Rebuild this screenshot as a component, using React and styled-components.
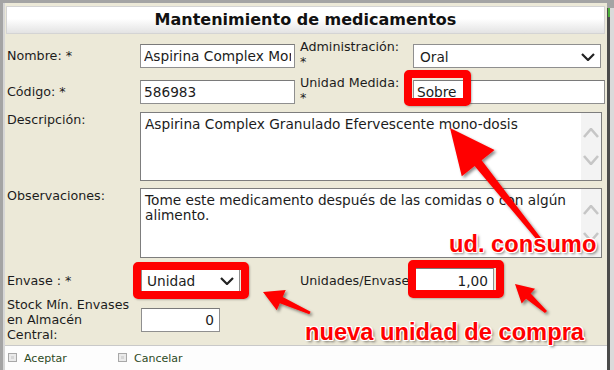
import React from "react";
import styled, { createGlobalStyle } from "styled-components";

const GlobalStyle = createGlobalStyle`
  html, body {
    margin: 0;
    padding: 0;
    background: #a4a4a4;
  }
  * {
    box-sizing: border-box;
  }
`;

const Window = styled.div`
  position: relative;
  width: 614px;
  height: 370px;
  display: flex;
  padding: 3px 0 0 3px;
  background: #a4a4a4;
  overflow: hidden;
  font-family: "DejaVu Sans", Verdana, sans-serif;
  font-size: 12.7px;
  color: #1c1c1c;
`;

const Dialog = styled.div`
  width: 604px;
  display: flex;
  flex-direction: column;
  background: #ece9d8;
  border-left: 2px solid #d6d6d6;
`;

const RightEdge = styled.div`
  flex: 1;
  margin-top: 5px;
  background: #dadada;
  border-left: 3px solid #4b4b4b;
  position: relative;
  &::before {
    content: "";
    position: absolute;
    left: -2px;
    top: 0;
    width: 2px;
    height: 9px;
    background: #4caf3a;
  }
`;

const TitleBar = styled.div`
  margin: 3px 2px 0 1px;
  height: 28px;
  border: 1px solid #d4d4d4;
  background: linear-gradient(#ffffff 0%, #ffffff 45%, #e3e3e3 100%);
  text-align: center;
  font-weight: 700;
  font-size: 16px;
  line-height: 26px;
  color: #111;
`;

const Form = styled.div`
  padding-left: 2px;
  display: flex;
  flex-direction: column;
`;

const Row = styled.div`
  display: grid;
  grid-template-columns: 133px 155px 118px 1fr;
  align-items: ${(p) => p.$align || "center"};
  margin-top: ${(p) => p.$mt}px;
  height: ${(p) => p.$h}px;
`;

const Label = styled.div`
  line-height: 15px;
  padding-left: ${(p) => (p.$second ? 5 : 0)}px;
  margin-top: ${(p) => p.$shift || 0}px;
  white-space: pre-line;
`;

const Field = styled.input`
  width: ${(p) => p.$w}px;
  height: 24px;
  margin-left: ${(p) => p.$ml || 0}px;
  border: 1px solid #8f8f8f;
  border-top-color: #7a7a7a;
  background: #fff;
  padding: 1px ${(p) => (p.$right ? 5 : 3)}px 0;
  font-family: inherit;
  font-size: 13.7px;
  color: #1c1c1c;
  text-align: ${(p) => (p.$right ? "right" : "left")};
  outline: none;
`;

const Select = styled.div`
  width: ${(p) => p.$w}px;
  height: 24px;
  margin-left: ${(p) => p.$ml || 0}px;
  border: 1px solid #8f8f8f;
  background: #fff;
  display: flex;
  align-items: center;
  justify-content: space-between;
  padding: 2px 5px 0 ${(p) => p.$pl}px;
  font-size: 13.7px;
`;

const TextBox = styled.div`
  grid-column: 2 / 5;
  width: 462px;
  height: 100%;
  border: 1px solid #7d7d7d;
  background: #fff;
  display: flex;
`;

const TextContent = styled.div`
  flex: 1;
  padding: 4px 4px;
  font-size: 13.7px;
  line-height: 15px;
`;

const ScrollStrip = styled.div`
  width: 20px;
  background: #f3f3f3;
  display: flex;
  flex-direction: column;
  align-items: center;
  justify-content: center;
  gap: 17px;
`;

const Footer = styled.div`
  margin-top: auto;
  height: 25px;
  border-top: 1px solid #c9c9c9;
  background: #fdfdfd;
  display: flex;
  align-items: center;
  padding: 1px 0 0 3px;
  font-size: 11px;
`;

const FooterAction = styled.div`
  width: ${(p) => p.$w}px;
  display: flex;
  align-items: center;
  gap: 7px;
  color: #2d4a24;
`;

const ActionIcon = styled.span`
  width: 9px;
  height: 9px;
  border: 1px solid #a8a8a8;
  background: #d6d6d6;
  box-shadow: inset 0 0 0 2px #eaeaea;
  margin-top: -2px;
`;

const Overlay = styled.div`
  position: absolute;
  inset: 0;
  pointer-events: none;
`;

const Highlight = styled.div`
  position: absolute;
  left: ${(p) => p.$x}px;
  top: ${(p) => p.$y}px;
  width: ${(p) => p.$w}px;
  height: ${(p) => p.$h}px;
  border: 8px solid #ff0000;
  border-radius: 5px;
  box-shadow: 1px 1px 2px rgba(0, 0, 0, 0.25);
`;

const Note = styled.div`
  position: absolute;
  left: ${(p) => p.$x}px;
  top: ${(p) => p.$y}px;
  font-family: "Liberation Sans", Arial, sans-serif;
  font-weight: 700;
  font-size: 23.7px;
  line-height: 24px;
  color: #ff0000;
  white-space: nowrap;
  text-shadow: 1px 0 0 #fff, -1px 0 0 #fff, 0 1px 0 #fff, 0 -1px 0 #fff,
    1px 1px 0 #fff, -1px -1px 0 #fff, 1px -1px 0 #fff, -1px 1px 0 #fff,
    2px 2px 3px rgba(0, 0, 0, 0.55);
`;

const Chevron = ({ up, color = "#222", w = 14, h = 8, sw = 2.2 }) => (
  <svg width={w} height={h} viewBox={`0 0 ${w} ${h}`}>
    <polyline
      points={
        up
          ? `1,${h - 1} ${w / 2},1 ${w - 1},${h - 1}`
          : `1,1 ${w / 2},${h - 1} ${w - 1},1`
      }
      fill="none"
      stroke={color}
      strokeWidth={sw}
    />
  </svg>
);

const Scroll = () => (
  <ScrollStrip>
    <Chevron up color="#c6c6c6" w={16} h={10} sw={2.6} />
    <Chevron color="#c6c6c6" w={16} h={10} sw={2.6} />
  </ScrollStrip>
);

// flecha: punta, esquinas de la cabeza, y el astil que se estrecha hacia la cola
const arrowPoints = (tip, tail, headLen, headHalf, shaftHead, shaftTail) => {
  const dx = tip[0] - tail[0];
  const dy = tip[1] - tail[1];
  const len = Math.hypot(dx, dy);
  const u = [dx / len, dy / len];
  const p = [-u[1], u[0]];
  const b = [tip[0] - u[0] * headLen, tip[1] - u[1] * headLen];
  const pt = (c, k) => `${c[0] + p[0] * k},${c[1] + p[1] * k}`;
  return [
    `${tip[0]},${tip[1]}`,
    pt(b, headHalf),
    pt(b, shaftHead),
    pt(tail, shaftTail),
    pt(tail, -shaftTail),
    pt(b, -shaftHead),
    pt(b, -headHalf),
  ].join(" ");
};

const Arrows = () => (
  <svg width="614" height="370" style={{ position: "absolute", left: 0, top: 0 }}>
    <defs>
      <filter id="shadow" x="-20%" y="-20%" width="140%" height="140%">
        <feDropShadow dx="2" dy="2" stdDeviation="1.5" floodColor="#000" floodOpacity="0.45" />
      </filter>
    </defs>
    <g fill="#ff0000" filter="url(#shadow)">
      <polygon points={arrowPoints([450, 128], [543, 244], 45, 21, 4.5, 2)} />
      <polygon points={arrowPoints([263, 292], [310, 313], 20, 11, 3.5, 1.5)} />
      <polygon points={arrowPoints([515, 284], [546, 312], 18, 10, 3.5, 1.5)} />
    </g>
  </svg>
);

export default function App() {
  return (
    <>
      <GlobalStyle />
      <Window>
        <Dialog>
          <TitleBar>Mantenimiento de medicamentos</TitleBar>
          <Form>
            <Row $mt={8} $h={24}>
              <Label>Nombre: *</Label>
              <Field $w={155} readOnly value="Aspirina Complex Mono-dosis" />
              <Label $second $shift={-3}>{"Administración:\n*"}</Label>
              <Select $w={188} $pl={6}>
                <span>Oral</span>
                <Chevron />
              </Select>
            </Row>
            <Row $mt={12} $h={24}>
              <Label>Código: *</Label>
              <Field $w={155} readOnly value="586983" />
              <Label $second $shift={-3}>{"Unidad Medida:\n*"}</Label>
              <Field $w={192} readOnly value="Sobre" />
            </Row>
            <Row $mt={10} $h={69} $align="start">
              <Label>Descripción:</Label>
              <TextBox>
                <TextContent>Aspirina Complex Granulado Efervescente mono-dosis</TextContent>
                <Scroll />
              </TextBox>
            </Row>
            <Row $mt={7} $h={70} $align="start">
              <Label>Observaciones:</Label>
              <TextBox>
                <TextContent>
                  Tome este medicamento después de las comidas o con algún alimento.
                </TextContent>
                <Scroll />
              </TextBox>
            </Row>
            <Row $mt={10} $h={24}>
              <Label>Envase : *</Label>
              <Select $w={99} $ml={1} $pl={5}>
                <span>Unidad</span>
                <Chevron />
              </Select>
              <Label $second>Unidades/Envase</Label>
              <Field $w={79} $ml={2} $right readOnly value="1,00" />
            </Row>
            <Row $mt={5} $h={45}>
              <Label>{"Stock Mín. Envases\nen Almacén\nCentral:"}</Label>
              <Field $w={79} $ml={1} $right readOnly value="0" />
            </Row>
          </Form>
          <Footer>
            <FooterAction $w={110}>
              <ActionIcon />
              Aceptar
            </FooterAction>
            <FooterAction $w={110}>
              <ActionIcon />
              Cancelar
            </FooterAction>
          </Footer>
        </Dialog>
        <RightEdge />
        <Overlay>
          <Highlight $x={404} $y={70} $w={67} $h={36} />
          <Highlight $x={133} $y={262} $w={116} $h={37} />
          <Highlight $x={408} $y={260} $w={96} $h={38} />
          <Arrows />
          <Note $x={449} $y={232}>ud. consumo</Note>
          <Note $x={305} $y={320}>nueva unidad de compra</Note>
        </Overlay>
      </Window>
    </>
  );
}
